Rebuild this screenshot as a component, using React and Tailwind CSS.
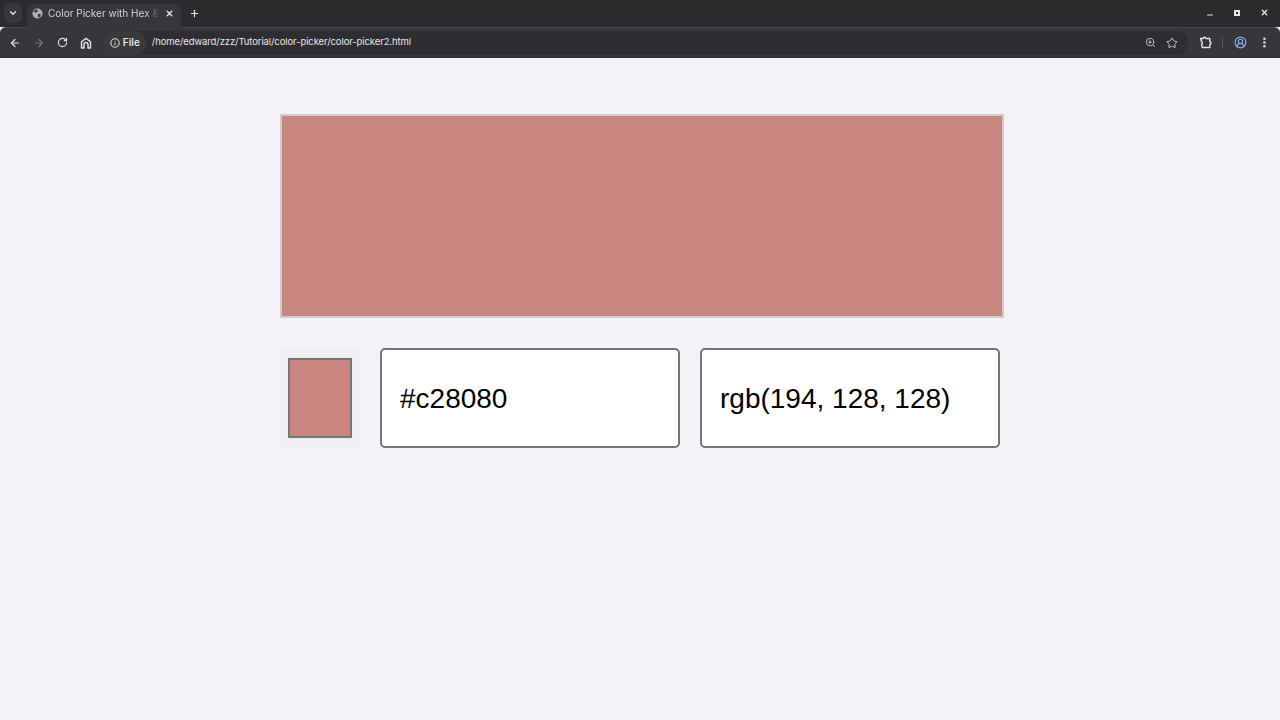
import { useState } from 'react';
import {
  ArrowLeft, ArrowRight, RotateCw, Info, ZoomIn, Star, CircleUserRound,
  EllipsisVertical, ChevronDown, X, Plus, Minus,
} from 'lucide-react';

/* Chrome's default favicon: a filled grey globe */
function GlobeFill() {
  return (
    <svg width="11" height="11" viewBox="0 0 12 12" className="mr-[5px] shrink-0">
      <circle cx="6" cy="6" r="5.5" fill="#b0afb3" />
      <path d="M3 2.2 5.8 1.6 6.6 3.2 5 4.6 3.4 4.8 2 4ZM6.5 6.2 9.6 6.6 9 9.2 7.2 10.6 6.4 8.4Z" fill="#37363a" />
    </svg>
  );
}

/* Home with the arched door */
function HomeArch() {
  return (
    <svg width="12" height="12" viewBox="0 0 12 12" fill="none" stroke="#e3e3e3" strokeWidth="1.4" className="ml-[12px] shrink-0">
      <path d="M1.5 11V4.8L6 1.4l4.5 3.4V11H8V7.5a2 2 0 0 0-4 0V11Z" strokeLinejoin="round" />
    </svg>
  );
}

/* Extensions button */
function ExtPiece() {
  return (
    <svg width="13" height="13" viewBox="0 0 13 13" fill="none" stroke="#e3e3e3" strokeWidth="1.4" className="ml-[11px] shrink-0">
      <path d="M1.5 2.5H4.2a1.3 1.3 0 0 1 2.6 0h4v3.2a1.3 1.3 0 0 1 0 2.6v3.2H3.2l-.6-3.4a1.3 1.3 0 0 0 0-2.4Z" strokeLinejoin="round" />
    </svg>
  );
}

/* Browser chrome: tab strip */
function TabStrip() {
  return (
    <div className="flex h-[27px] items-end bg-[#2b2a2d] pl-[4px]">
      <div className="mb-[4px] mr-[5px] flex h-[20px] w-[18px] items-center justify-center rounded-[6px] bg-[#37363a]">
        <ChevronDown size={10} strokeWidth={3} className="text-[#e3e3e3]" />
      </div>
      <div className="relative z-10 -mb-px flex h-[24px] w-[154px] items-center rounded-t-[8px] bg-[#37363a] pb-[5px] pl-[5px] pr-[7px]">
        <GlobeFill />
        <span className="w-[111px] overflow-hidden whitespace-nowrap font-['Inter',sans-serif] text-[10px] text-[#d4d4d6] [mask-image:linear-gradient(to_right,black_88%,transparent)]">
          Color Picker with Hex &amp;
        </span>
        <X size={9} strokeWidth={3.5} className="ml-auto text-[#e8e8e8]" />
      </div>
      <div className="mb-[5px] ml-[8px] flex h-[18px] items-center">
        <Plus size={11} strokeWidth={2.5} className="text-[#e8e8e8]" />
      </div>
      <div className="ml-auto flex h-full items-center pb-[2px] pr-[11px]">
        <Minus size={8} strokeWidth={3.5} className="mt-[5px] text-[#e8e8e8]" />
        <div className="ml-[20px] h-[6px] w-[6px] border-[2px] border-[#e8e8e8]" />
        <X size={9} strokeWidth={3.5} className="ml-[20px] text-[#e8e8e8]" />
      </div>
    </div>
  );
}

/* Browser chrome: address bar row */
function Toolbar() {
  return (
    <div className="flex h-[31px] items-center rounded-t-[6px] border-t border-b border-t-[#48474b] border-b-[#2d2c30] bg-[#37363a] pl-[9px] pr-[9px]">
      <ArrowLeft size={12} strokeWidth={2.5} className="text-[#e3e3e3]" />
      <ArrowRight size={12} strokeWidth={2.5} className="ml-[12px] text-[#77767b]" />
      <RotateCw size={11} strokeWidth={2.5} className="ml-[12px] text-[#e3e3e3]" />
      <HomeArch />
      <div className="ml-[12px] flex h-[24px] w-[1091px] items-center rounded-full bg-[#2e2d31] pr-[10px]">
        <div className="flex h-full items-center rounded-full bg-[#3a393d] pl-[6px] pr-[6px]">
          <Info size={10} strokeWidth={2.5} className="text-[#e3e3e3]" />
          <span className="ml-[3px] font-['Inter',sans-serif] text-[10px] font-semibold text-[#e3e3e3]">File</span>
        </div>
        <span className="ml-[6px] font-['Inter',sans-serif] text-[9.5px] tracking-[-0.1px] text-[#e6e6e8]">/home/edward/zzz/Tutorial/color-picker/color-picker2.html</span>
        <ZoomIn size={11} strokeWidth={2} className="ml-auto text-[#c7c7c7]" />
        <Star size={12} strokeWidth={2} className="ml-[10px] text-[#c7c7c7]" />
      </div>
      <ExtPiece />
      <div className="ml-[10px] h-[10px] w-px bg-[#55545a]" />
      <CircleUserRound size={13} strokeWidth={2} className="ml-[11px] text-[#8ab4f8]" />
      <EllipsisVertical size={13} strokeWidth={3} className="ml-[11px] text-[#e3e3e3]" />
    </div>
  );
}

export default function App() {
  const [hex] = useState('#c28080');
  const [rgb] = useState('rgb(194, 128, 128)');

  return (
    <div className="flex h-[720px] w-[1280px] flex-col overflow-hidden bg-[#f4f2f6] font-['Liberation_Sans',Arial,sans-serif]">
      <TabStrip />
      <Toolbar />
      <main className="pl-[280px] pt-[56px]">
        <div className="h-[204px] w-[724px] border-2 border-[#cccccc] bg-[#c98681]" />
        <div className="mt-[30px] flex">
          <div className="flex h-[100px] w-[80px] items-center justify-center bg-[#f0eff2]">
            <div className="h-[80px] w-[64px] border-2 border-[#767676] bg-[#c98681]" />
          </div>
          <input
            readOnly
            value={hex}
            className="ml-[20px] h-[100px] w-[300px] rounded-[5px] border-2 border-[#767676] bg-white px-[18px] pt-[2px] text-[28px] text-black outline-none"
          />
          <input
            readOnly
            value={rgb}
            className="ml-[20px] h-[100px] w-[300px] rounded-[5px] border-2 border-[#767676] bg-white px-[18px] pt-[2px] text-[28px] text-black outline-none"
          />
        </div>
      </main>
    </div>
  );
}
